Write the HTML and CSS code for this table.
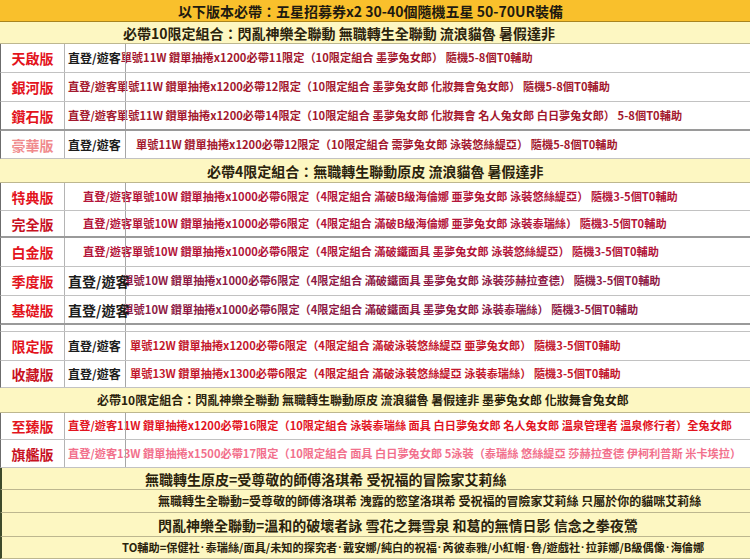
FILE: index.html
```html
<!DOCTYPE html>
<html lang="zh-Hant">
<head>
<meta charset="utf-8">
<link rel="stylesheet" href="styles.css">
</head>
<body>
<div class="sheet">
  <div class="band title h22 p-title">以下版本必帶：五星招募券x2 30-40個隨機五星 50-70UR裝備</div>
  <div class="band h22 p-y1">必帶10限定組合：閃亂神樂全聯動 無職轉生全聯動 流浪貓魯 暑假達非</div>

  <div class="row h29"><div class="lab c-red">天啟版</div><div class="txt t-dark"><span class="zd">直登/遊客</span><span>單號11W 鑽單抽捲x1200必帶11限定（10限定組合 墨夢兔女郎） 隨機5-8個T0輔助</span></div></div>
  <div class="row h29"><div class="lab c-red">銀河版</div><div class="txt t-dark">直登/遊客單號11W 鑽單抽捲x1200必帶12限定（10限定組合 墨夢兔女郎 化妝舞會兔女郎） 隨機5-8個T0輔助</div></div>
  <div class="row h29 dark-line"><div class="lab c-red">鑽石版</div><div class="txt t-dark">直登/遊客單號11W 鑽單抽捲x1200必帶14限定（10限定組合 墨夢兔女郎 化妝舞會 名人兔女郎 白日夢兔女郎） 5-8個T0輔助</div></div>
  <div class="row h28"><div class="lab c-pink">豪華版</div><div class="txt t-dark"><span class="zd cell">直登/遊客</span><span class="after-cell">單號11W 鑽單抽捲x1200必帶12限定（10限定組合 需夢兔女郎 泳裝悠絲緹亞） 隨機5-8個T0輔助</span></div></div>

  <div class="band h24 p-y2">必帶4限定組合：無職轉生聯動原皮 流浪貓魯 暑假達非</div>

  <div class="row h28"><div class="lab c-red">特典版</div><div class="txt t-crim indent">直登/遊客單號10W 鑽單抽捲x1000必帶6限定（4限定組合 滿破B級海倫娜 亜夢兔女郎 泳裝悠絲緹亞） 隨機3-5個T0輔助</div></div>
  <div class="row h27 dark-line"><div class="lab c-deep">完全版</div><div class="txt t-crim indent">直登/遊客單號10W 鑽單抽捲x1000必帶6限定（4限定組合 滿破B級海倫娜 亜夢兔女郎 泳裝泰瑞絲） 隨機3-5個T0輔助</div></div>
  <div class="row h29"><div class="lab c-red">白金版</div><div class="txt t-crim indent">直登/遊客單號10W 鑽單抽捲x1000必帶6限定（4限定組合 滿破鐵面具 墨夢兔女郎 泳裝悠絲緹亞） 隨機3-5個T0輔助</div></div>
  <div class="row h29"><div class="lab c-red">季度版</div><div class="txt t-maroon"><span class="zd big">直登/遊客</span><span class="under">單號10W 鑽單抽捲x1000必帶6限定（4限定組合 滿破鐵面具 墨夢兔女郎 泳裝莎赫拉查德） 隨機3-5個T0輔助</span></div></div>
  <div class="row h29 dark-line"><div class="lab c-red">基礎版</div><div class="txt t-maroon"><span class="zd big">直登/遊客</span><span class="under">單號10W 鑽單抽捲x1000必帶6限定（4限定組合 滿破鐵面具 墨夢兔女郎 泳裝泰瑞絲） 隨機3-5個T0輔助</span></div></div>
  <div class="row h7"><div class="lab"></div></div>

  <div class="row h29"><div class="lab c-red">限定版</div><div class="txt t-red"><span class="zd cell">直登/遊客</span><span class="after-cell2">單號12W 鑽單抽捲x1200必帶6限定（4限定組合 滿破泳裝悠絲緹亞 亜夢兔女郎） 隨機3-5個T0輔助</span></div></div>
  <div class="row h27"><div class="lab c-deep">收藏版</div><div class="txt t-red"><span class="zd cell">直登/遊客</span><span class="after-cell2">單號13W 鑽單抽捲x1300必帶6限定（4限定組合 滿破泳裝悠絲緹亞 泳裝泰瑞絲） 隨機3-5個T0輔助</span></div></div>

  <div class="band h25 small p-y3">必帶10限定組合：閃亂神樂全聯動 無職轉生聯動原皮 流浪貓魯 暑假達非 墨夢兔女郎 化妝舞會兔女郎</div>

  <div class="row h27"><div class="lab c-red">至臻版</div><div class="txt t-bright">直登/遊客11W 鑽單抽捲x1200必帶16限定（10限定組合 泳裝泰瑞絲 面具 白日夢兔女郎 名人兔女郎 溫泉管理者 溫泉修行者）全兔女郎</div></div>
  <div class="row h28"><div class="lab c-deep">旗艦版</div><div class="txt t-pink">直登/遊客13W 鑽單抽捲x1500必帶17限定（10限定組合 面具 白日夢兔女郎 5泳裝（泰瑞絲 悠絲緹亞 莎赫拉查德 伊柯利普斯 米卡埃拉）</div></div>

  <div class="band foot h22 p-y4">無職轉生原皮=受尊敬的師傅洛琪希 受祝福的冒險家艾莉絲</div>
  <div class="band foot h23 small p-y5">無職轉生全聯動=受尊敬的師傅洛琪希 洩露的慾望洛琪希 受祝福的冒險家艾莉絲 只屬於你的貓咪艾莉絲</div>
  <div class="band foot h24 p-y6">閃亂神樂全聯動=溫和的破壞者詠 雪花之舞雪泉 和葛的無情日影 信念之拳夜鶯</div>
  <div class="band foot h22 tiny p-y7">TO輔助=保健社<span class="dot">·</span>泰瑞絲/面具/未知的探究者<span class="dot">·</span>戴安娜/純白的祝福<span class="dot">·</span>芮彼泰雅/小紅帽<span class="dot">·</span>魯/遊戲社<span class="dot">·</span>拉菲娜/B級偶像<span class="dot">·</span>海倫娜</div>
</div>
</body>
</html>
```
FILE: styles.css
```css
html, body {
  margin: 0;
  padding: 0;
  background: #ffffff;
}

.sheet {
  width: 750px;
  height: 559px;
  overflow: hidden;
  font-family: "Noto Sans CJK TC", "Noto Sans CJK SC", sans-serif;
  font-weight: 700;
}

.band {
  display: flex;
  align-items: center;
  box-sizing: border-box;
  background: #fdf7c2;
  border-bottom: 1px solid #bdb78f;
  color: #2a220c;
  font-size: 14px;
  line-height: 1;
  white-space: nowrap;
}

.band.title {
  background: #f9c02c;
  border-bottom: 1px solid #a88420;
  color: #1e1a10;
}

.band.small { font-size: 12px; }
.band.tiny { font-size: 11.2px; }

.band.foot { border-left: 2px solid #3d4a2a; }

.dot {
  font-family: "Liberation Sans", sans-serif;
  padding: 0 1px;
}

.p-title { padding-left: 178px; }
.p-y1 { padding-left: 123px; }
.p-y2 { padding-left: 207px; }
.p-y3 { padding-left: 97px; }
.p-y4 { padding-left: 143px; }
.p-y5 { padding-left: 156px; }
.p-y6 { padding-left: 156px; }
.p-y7 { padding-left: 120px; }

.h7 { height: 7px; }
.h22 { height: 22px; }
.h23 { height: 23px; }
.h24 { height: 24px; }
.h25 { height: 25px; }
.h27 { height: 27px; }
.h28 { height: 28px; }
.h29 { height: 29px; }

.row {
  display: flex;
  align-items: center;
  position: relative;
  box-sizing: border-box;
  background: #ffffff;
  border-left: 1px solid #6c6c6c;
  border-bottom: 1px solid #c2c2c2;
  white-space: nowrap;
  line-height: 1;
}

.row.dark-line { border-bottom: 2px solid #9a9a9a; }

.row::after {
  content: "";
  position: absolute;
  left: 124px;
  top: 0;
  bottom: 0;
  width: 1px;
  background: #a6a6a6;
}

.lab {
  width: 64px;
  flex: none;
  align-self: stretch;
  box-sizing: border-box;
  display: flex;
  align-items: center;
  justify-content: center;
  border-right: 1px solid #b4b4b4;
  font-size: 14px;
}

.c-red { color: #e3141d; }
.c-deep { color: #c8121f; }
.c-pink { color: #f08a8c; }

.txt {
  display: flex;
  align-items: center;
  padding-left: 3px;
  font-size: 11.2px;
}

.txt.indent { padding-left: 18px; }

.t-dark { color: #a3182e; }
.t-crim { color: #b3153a; }
.t-maroon { color: #8e1a45; }
.t-red { color: #c3172c; }
.t-bright { color: #e2141f; }
.t-pink { color: #f2708c; }

.zd {
  color: #1c1c1c;
  font-size: 12px;
}

.zd.big {
  font-size: 14px;
  position: relative;
  z-index: 1;
}

.zd.cell { width: 57px; flex: none; }

.after-cell { padding-left: 11px; }
.after-cell2 { padding-left: 5px; }

.under { margin-left: -7px; }
```
